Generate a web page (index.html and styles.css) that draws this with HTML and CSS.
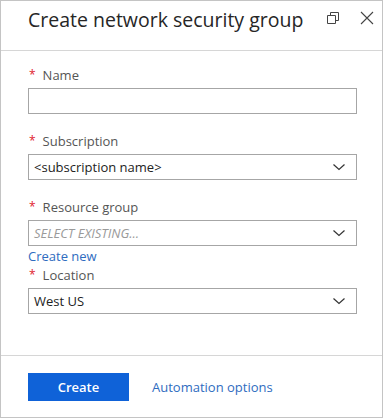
FILE: index.html
```html
<!DOCTYPE html>
<html lang="en">
<head>
    <meta charset="UTF-8">
    <meta name="viewport" content="width=device-width, initial-scale=1.0">
    <title>Create network security group</title>
    <link rel="stylesheet" href="styles.css">
</head>
<body>
    <div class="blade">
        <!-- Header -->
        <div class="blade-header">
            <h1>Create network security group</h1>
            <div class="header-icons">
                <svg class="icon" width="14" height="14" viewBox="0 0 14 14">
                    <path d="M1.5 4.5h8v8h-8z M4.5 4.5v-3h8v8h-3" fill="none" stroke="#444" stroke-width="1"/>
                </svg>
                <svg class="icon" width="14" height="14" viewBox="0 0 14 14">
                    <path d="M1 1l12 12M13 1L1 13" fill="none" stroke="#444" stroke-width="1.1"/>
                </svg>
            </div>
        </div>

        <!-- Form -->
        <div class="blade-content">
            <div class="field">
                <label><span class="req">*</span>Name</label>
                <input type="text" class="text-input">
            </div>
            <div class="field">
                <label><span class="req">*</span>Subscription</label>
                <div class="select">
                    <span>&lt;subscription name&gt;</span>
                    <svg width="14" height="8" viewBox="0 0 14 8"><path d="M1.5 1.5l5.5 5 5.5-5" fill="none" stroke="#333" stroke-width="1.2"/></svg>
                </div>
            </div>
            <div class="field">
                <label><span class="req">*</span>Resource group</label>
                <div class="select">
                    <span class="placeholder">SELECT EXISTING...</span>
                    <svg width="14" height="8" viewBox="0 0 14 8"><path d="M1.5 1.5l5.5 5 5.5-5" fill="none" stroke="#333" stroke-width="1.2"/></svg>
                </div>
                <a href="#" class="create-new">Create new</a>
            </div>
            <div class="field">
                <label><span class="req">*</span>Location</label>
                <div class="select">
                    <span>West US</span>
                    <svg width="14" height="8" viewBox="0 0 14 8"><path d="M1.5 1.5l5.5 5 5.5-5" fill="none" stroke="#333" stroke-width="1.2"/></svg>
                </div>
            </div>
        </div>

        <!-- Footer -->
        <div class="blade-footer">
            <button type="button" class="btn-primary">Create</button>
            <a href="#" class="link">Automation options</a>
        </div>
    </div>
</body>
</html>
```

FILE: styles.css
```css
* {
    margin: 0;
    padding: 0;
    box-sizing: border-box;
}

body {
    font-family: "Segoe UI", "Open Sans", "Noto Sans", sans-serif;
    background-color: #fff;
    color: #333;
}

.blade {
    width: 383px;
    height: 418px;
    border: 1px solid #c4c4c4;
    display: flex;
    flex-direction: column;
}

.blade-header {
    height: 50px;
    border-bottom: 1px solid #d6d6d6;
    display: flex;
    align-items: flex-start;
    padding: 5px 8px 0 27px;
}

.blade-header h1 {
    flex: 1;
    font-size: 19.5px;
    font-weight: normal;
    color: #262626;
    line-height: 28px;
}

.header-icons {
    display: flex;
    gap: 20px;
    padding-top: 5px;
}

.blade-content {
    flex: 1;
    padding: 15px 25px 0 27px;
}

.field {
    margin-bottom: 18px;
}

.field label {
    display: block;
    font-size: 13px;
    line-height: 18px;
    color: #555;
    margin-bottom: 4px;
}

.req {
    color: #e0202c;
    font-size: 12px;
    vertical-align: 1px;
    margin-right: 7px;
    margin-left: 1px;
}

.text-input {
    display: block;
    width: 100%;
    height: 26px;
    border: 1px solid #a6a6a6;
    font: inherit;
}

.select {
    height: 26px;
    border: 1px solid #a6a6a6;
    display: flex;
    align-items: center;
    justify-content: space-between;
    padding: 0 10px 0 5px;
    font-size: 13px;
    color: #222;
}

.select .placeholder {
    font-style: italic;
    color: #9a9a9a;
}

.create-new {
    display: block;
    font-size: 13px;
    line-height: 18px;
    margin-top: 1px;
    margin-bottom: -17px;
    color: #2f6cc0;
    text-decoration: none;
}

.blade-footer {
    height: 62px;
    border-top: 1px solid #d6d6d6;
    display: flex;
    align-items: center;
    padding-left: 27px;
    gap: 23px;
}

.btn-primary {
    width: 101px;
    height: 28px;
    background-color: #0f62d8;
    color: #fff;
    border: none;
    font: inherit;
    font-size: 13px;
    font-weight: 600;
    cursor: pointer;
}

.link {
    font-size: 13px;
    color: #2f6cc0;
    text-decoration: none;
}
```
